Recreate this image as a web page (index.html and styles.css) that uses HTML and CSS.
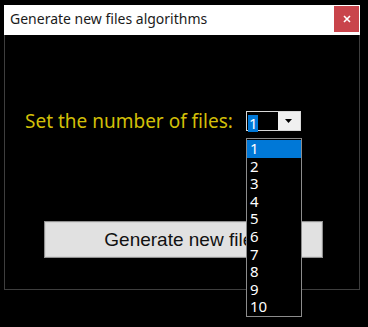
FILE: index.html
```html
<!DOCTYPE html>
<html lang="en">
<head>
    <meta charset="UTF-8">
    <title>Generate new files algorithms</title>
    <link rel="stylesheet" href="styles.css">
</head>
<body>
    <div class="window">
        <div class="title-bar">
            <span class="title">Generate new files algorithms</span>
            <button class="close-btn" aria-label="Close">
                <svg width="10" height="10" viewBox="0 0 10 10">
                    <path d="M2 2L8 8M8 2L2 8" stroke="#fff" stroke-width="1.6"/>
                </svg>
            </button>
        </div>

        <div class="window-body">
            <div class="files-row">
                <span class="files-label">Set the number of files:</span>
                <div class="combo">
                    <div class="combo-value"><span class="selected">1</span></div>
                    <div class="combo-arrow">
                        <svg width="7" height="4" viewBox="0 0 7 4">
                            <path d="M0 0H7L3.5 4Z" fill="#000"/>
                        </svg>
                    </div>
                </div>
            </div>

            <div class="actions">
                <button class="btn-generate">Generate new files</button>
            </div>
        </div>
    </div>

    <!-- open dropdown of the combo box, drawn over the window -->
    <ul class="combo-list">
        <li class="active">1</li>
        <li>2</li>
        <li>3</li>
        <li>4</li>
        <li>5</li>
        <li>6</li>
        <li>7</li>
        <li>8</li>
        <li>9</li>
        <li>10</li>
    </ul>
</body>
</html>
```

FILE: styles.css
```css
* {
    margin: 0;
    padding: 0;
    box-sizing: border-box;
}

body {
    background: #000;
    font-family: 'Noto Sans', 'Open Sans', sans-serif;
    width: 368px;
    height: 327px;
    overflow: hidden;
    position: relative;
}

.window {
    width: 356px;
    margin: 5px 0 0 4px;
}

.title-bar {
    height: 30px;
    background: #fff;
    display: flex;
    align-items: flex-start;
    justify-content: space-between;
    padding-right: 1px;
}

.title {
    font-size: 14px;
    color: #1b1b1b;
    padding: 5px 0 0 6px;
    line-height: 18px;
}

.close-btn {
    width: 25px;
    height: 26px;
    margin-top: 1px;
    border: none;
    background: #c9444b;
    display: flex;
    align-items: center;
    justify-content: center;
}

.window-body {
    height: 255px;
    background: #000;
    border: 1px solid #3e3e3e;
    border-top: none;
    padding-top: 76px;
}

.files-row {
    display: flex;
    align-items: center;
    padding-left: 20px;
    gap: 13px;
}

.files-label {
    font-size: 19px;
    color: #d2bf08;
    line-height: 20px;
}

.combo {
    display: flex;
    width: 55px;
    height: 20px;
    border: 1px solid #d9d9d9;
    background: #000;
}

.combo-value {
    flex: 1;
    padding: 0 0 0 1px;
}

.selected {
    display: inline-block;
    background: #0078d7;
    color: #fff;
    font-size: 15px;
    line-height: 17px;
    padding: 0 1px;
    height: 17px;
    margin-top: 1px;
}

.combo-arrow {
    width: 22px;
    background: #f0f0f0;
    display: flex;
    align-items: center;
    justify-content: center;
}

.actions {
    padding: 90px 0 0 39px;
}

.btn-generate {
    width: 279px;
    height: 37px;
    background: #e1e1e1;
    border: 1px solid #8f8f8f;
    box-shadow: inset 0 0 0 1px #d4d4d4;
    font-family: 'Liberation Sans', Arial, sans-serif;
    font-size: 19px;
    color: #111;
}

.combo-list {
    position: absolute;
    left: 246px;
    top: 138px;
    width: 56px;
    height: 179px;
    list-style: none;
    background: #000;
    border: 1px solid #8c8c8c;
    padding-top: 1px;
}

.combo-list li {
    height: 17.6px;
    line-height: 17.6px;
    font-size: 15px;
    color: #fff;
    padding-left: 3px;
}

.combo-list li.active {
    background: #0078d7;
}
```
